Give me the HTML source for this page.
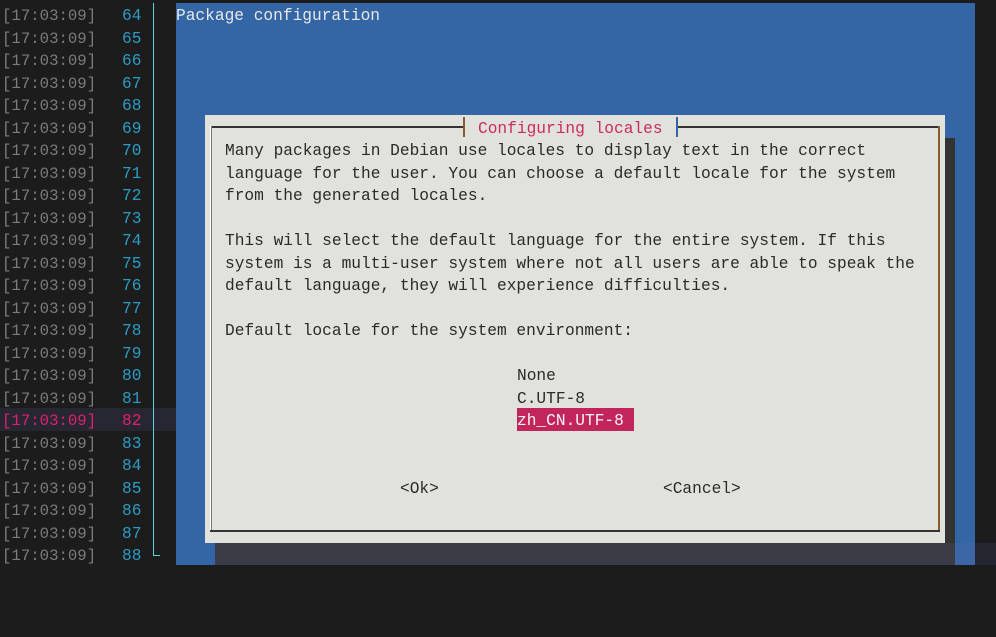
<!DOCTYPE html>
<html><head><meta charset="utf-8"><style>
*{margin:0;padding:0;box-sizing:border-box}
body{width:996px;height:637px;background:#1c1c1c;position:relative;overflow:hidden;font-family:"Liberation Mono","DejaVu Sans Mono",monospace;font-size:16.2px;}
.a{position:absolute;white-space:pre;line-height:22.5px;height:22.5px}
.t{padding-top:2px}
.ts{color:#7c7c7c;left:2px;font-size:15.7px}
.ln{color:#2b9cc4;left:122px}
.d{color:#2a2a2a}
</style></head><body>
<div class="a" style="left:0;top:408px;width:176px;background:#272733"></div>
<div id="L"></div>
<div style="position:absolute;left:153px;top:3px;width:1px;height:553px;background:#5fd0dc"></div>
<div style="position:absolute;left:153px;top:555px;width:7px;height:1px;background:#5fd0dc"></div>
<div style="position:absolute;left:176px;top:3px;width:799px;height:562px;background:#3465a4"></div>
<div style="position:absolute;left:215px;top:543px;width:740px;height:22px;background:#3c3c46"></div>
<div style="position:absolute;left:955px;top:543px;width:20px;height:22px;background:#3d66a6"></div>
<div style="position:absolute;left:975px;top:543px;width:21px;height:22px;background:#262630"></div>
<div class="a t" style="left:176px;top:3px;color:#e8e8e8">Package configuration</div>
<div style="position:absolute;left:945px;top:138px;width:10px;height:405px;background:#333333"></div>
<div style="position:absolute;left:205px;top:115px;width:740px;height:428px;background:#e2e2dc"></div>
<div style="position:absolute;left:210px;top:126px;width:254px;height:2px;background:#333"></div>
<div style="position:absolute;left:677px;top:126px;width:263px;height:2px;background:#333"></div>
<div style="position:absolute;left:210px;top:126px;width:2px;height:406px;background:#777;border-left:1px solid #fff"></div>
<div style="position:absolute;left:938px;top:126px;width:2px;height:406px;background:#8a5a30"></div>
<div style="position:absolute;left:210px;top:530px;width:730px;height:2px;background:#333"></div>
<div style="position:absolute;left:463px;top:117px;width:2px;height:20px;background:#8a5a30"></div>
<div style="position:absolute;left:676px;top:117px;width:2px;height:20px;background:#3465a4"></div>
<div class="a t" style="left:478px;top:116px;color:#cc2a60">Configuring locales</div>
<div class="a d t" style="left:225px;top:138px">Many packages in Debian use locales to display text in the correct</div>
<div class="a d t" style="left:225px;top:161px">language for the user. You can choose a default locale for the system</div>
<div class="a d t" style="left:225px;top:183px">from the generated locales.</div>
<div class="a d t" style="left:225px;top:228px">This will select the default language for the entire system. If this</div>
<div class="a d t" style="left:225px;top:251px">system is a multi-user system where not all users are able to speak the</div>
<div class="a d t" style="left:225px;top:273px">default language, they will experience difficulties.</div>
<div class="a d t" style="left:225px;top:318px">Default locale for the system environment:</div>
<div class="a d t" style="left:517px;top:363px">None</div>
<div class="a d t" style="left:517px;top:386px">C.UTF-8</div>
<div class="a t" style="left:517px;top:408px;width:117px;background:#c2255c;color:#f4f4f4">zh_CN.UTF-8</div>
<div class="a d t" style="left:400px;top:476px">&lt;Ok&gt;</div>
<div class="a d t" style="left:663px;top:476px">&lt;Cancel&gt;</div>
<script>
var h='';for(var i=0;i<25;i++){var t=3+22.5*i,s=(i==18)?'color:#e0206a':'';
h+='<div class="a ts t" style="top:'+t+'px;'+s+'">[17:03:09]</div><div class="a ln t" style="top:'+t+'px;'+s+'">'+(64+i)+'</div>';}
document.getElementById('L').innerHTML=h;
</script>
</body></html>
